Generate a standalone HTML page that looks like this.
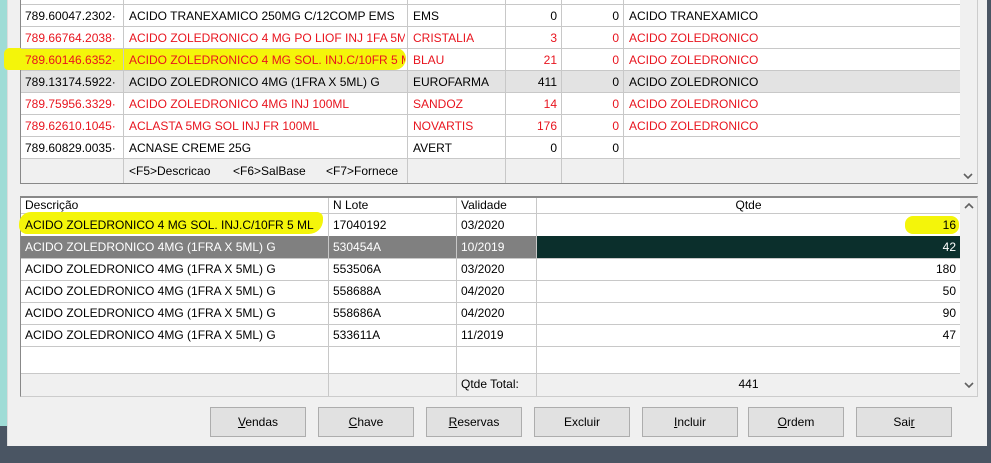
<!DOCTYPE html><html><head><style>
*{margin:0;padding:0;box-sizing:border-box}
body{width:991px;height:463px;overflow:hidden;background:#4a5563;font-family:Tahoma,"Liberation Sans",sans-serif;font-size:12px;position:relative}
.a{position:absolute}
.t{position:absolute;white-space:nowrap;line-height:22px;overflow:hidden}
.r{color:#e8141e}
.hl{position:absolute;background:#f4f50a;border-radius:10px}
.btn{position:absolute;top:407px;height:30px;width:96px;background:#e1e1e1;border:1px solid #adadad;text-align:center;line-height:28px}
.vl{position:absolute;width:1px;background:#c8c8c8}
.hlin{position:absolute;height:1px;background:#c8c8c8}
.ar{position:absolute;z-index:5}
</style></head><body>
<div class="a" style="left:0;top:0;width:8px;height:426px;background:#9fdcd6"></div>
<div class="a" style="left:7px;top:0;width:980px;height:446px;background:#f0f0f0;border-left:1px solid #ddd"></div>
<!-- top grid -->
<div class="a" style="left:20px;top:0;width:958px;height:184px;background:#fff;border-left:1px solid #888;border-bottom:1px solid #888;border-right:1px solid #ccc"></div>
<div class="a" style="left:21px;top:70px;width:939px;height:22px;background:#e3e3e3"></div>
<div class="a" style="left:21px;top:159px;width:939px;height:24px;background:#f0f0f0"></div>
<div class="a" style="left:960px;top:0;width:17px;height:183px;background:#f0f0f0"></div>
<div class="hl" style="left:4px;top:48px;width:402px;height:22px;border-radius:8px 14px 16px 6px"></div>
<div class="hlin" style="left:21px;top:4px;width:939px"></div>
<div class="hlin" style="left:21px;top:26px;width:939px"></div>
<div class="hlin" style="left:21px;top:48px;width:939px"></div>
<div class="hlin" style="left:21px;top:70px;width:939px"></div>
<div class="hlin" style="left:21px;top:92px;width:939px"></div>
<div class="hlin" style="left:21px;top:114px;width:939px"></div>
<div class="hlin" style="left:21px;top:136px;width:939px"></div>
<div class="hlin" style="left:21px;top:158px;width:939px"></div>
<div class="vl" style="left:123px;top:0;height:183px"></div>
<div class="vl" style="left:407px;top:0;height:183px"></div>
<div class="vl" style="left:505px;top:0;height:183px"></div>
<div class="vl" style="left:561px;top:0;height:183px"></div>
<div class="vl" style="left:623px;top:0;height:183px"></div>
<svg class="ar" style="left:963px;top:172px" width="10" height="8"><path d="M1 2 L5 6 L9 2" stroke="#606060" stroke-width="1.6" fill="none"/></svg>

<div class="t" style="left:25px;top:5px;width:97px">789.60047.2302·</div><div class="t" style="left:129px;top:5px">ACIDO TRANEXAMICO 250MG C/12COMP EMS</div><div class="t" style="left:413px;top:5px">EMS</div><div class="t" style="left:506px;top:5px;width:51px;text-align:right">0</div><div class="t" style="left:562px;top:5px;width:57px;text-align:right">0</div><div class="t" style="left:629px;top:5px">ACIDO TRANEXAMICO</div>
<div class="t r" style="left:25px;top:27px;width:97px">789.66764.2038·</div><div class="t r" style="left:129px;top:27px;width:276px">ACIDO ZOLEDRONICO 4 MG PO LIOF INJ 1FA 5ML</div><div class="t r" style="left:413px;top:27px">CRISTALIA</div><div class="t r" style="left:506px;top:27px;width:51px;text-align:right">3</div><div class="t r" style="left:562px;top:27px;width:57px;text-align:right">0</div><div class="t r" style="left:629px;top:27px">ACIDO ZOLEDRONICO</div>
<div class="t r" style="left:25px;top:49px;width:97px">789.60146.6352·</div><div class="t r" style="left:129px;top:49px;width:276px">ACIDO ZOLEDRONICO 4 MG SOL. INJ.C/10FR 5 ML</div><div class="t r" style="left:413px;top:49px">BLAU</div><div class="t r" style="left:506px;top:49px;width:51px;text-align:right">21</div><div class="t r" style="left:562px;top:49px;width:57px;text-align:right">0</div><div class="t r" style="left:629px;top:49px">ACIDO ZOLEDRONICO</div>
<div class="t" style="left:25px;top:71px;width:97px">789.13174.5922·</div><div class="t" style="left:129px;top:71px">ACIDO ZOLEDRONICO 4MG (1FRA X 5ML) G</div><div class="t" style="left:413px;top:71px">EUROFARMA</div><div class="t" style="left:506px;top:71px;width:51px;text-align:right">411</div><div class="t" style="left:562px;top:71px;width:57px;text-align:right">0</div><div class="t" style="left:629px;top:71px">ACIDO ZOLEDRONICO</div>
<div class="t r" style="left:25px;top:93px;width:97px">789.75956.3329·</div><div class="t r" style="left:129px;top:93px">ACIDO ZOLEDRONICO 4MG INJ 100ML</div><div class="t r" style="left:413px;top:93px">SANDOZ</div><div class="t r" style="left:506px;top:93px;width:51px;text-align:right">14</div><div class="t r" style="left:562px;top:93px;width:57px;text-align:right">0</div><div class="t r" style="left:629px;top:93px">ACIDO ZOLEDRONICO</div>
<div class="t r" style="left:25px;top:115px;width:97px">789.62610.1045·</div><div class="t r" style="left:129px;top:115px">ACLASTA 5MG SOL INJ FR 100ML</div><div class="t r" style="left:413px;top:115px">NOVARTIS</div><div class="t r" style="left:506px;top:115px;width:51px;text-align:right">176</div><div class="t r" style="left:562px;top:115px;width:57px;text-align:right">0</div><div class="t r" style="left:629px;top:115px">ACIDO ZOLEDRONICO</div>
<div class="t" style="left:25px;top:137px;width:97px">789.60829.0035·</div><div class="t" style="left:129px;top:137px">ACNASE CREME 25G</div><div class="t" style="left:413px;top:137px">AVERT</div><div class="t" style="left:506px;top:137px;width:51px;text-align:right">0</div><div class="t" style="left:562px;top:137px;width:57px;text-align:right">0</div>
<div class="t" style="left:129px;top:160px">&lt;F5&gt;Descricao</div>
<div class="t" style="left:233px;top:160px">&lt;F6&gt;SalBase</div>
<div class="t" style="left:326px;top:160px;width:80px">&lt;F7&gt;Fornece</div>

<!-- bottom grid -->
<div class="a" style="left:20px;top:196px;width:958px;height:201px;background:#fff;border-top:2px solid #888;border-left:1px solid #888;border-right:1px solid #ccc;border-bottom:1px solid #ccc"></div>
<div class="a" style="left:21px;top:198px;width:939px;height:16px;background:#fff;border-bottom:1px solid #c8c8c8"></div>
<div class="a" style="left:960px;top:198px;width:17px;height:198px;background:#f0f0f0"></div>
<div class="a" style="left:21px;top:373px;width:939px;height:23px;background:#f0f0f0;border-top:1px solid #c8c8c8"></div>
<div class="a" style="left:21px;top:236px;width:516px;height:22px;background:#808080"></div>
<div class="a" style="left:537px;top:236px;width:423px;height:22px;background:#0b2f2c"></div>
<div class="hl" style="left:19px;top:212px;width:304px;height:22px;border-radius:12px 6px 14px 8px"></div>
<div class="hl" style="left:905px;top:216px;width:54px;height:18px;border-radius:8px"></div>
<div class="hlin" style="left:21px;top:258px;width:939px"></div>
<div class="hlin" style="left:21px;top:280px;width:939px"></div>
<div class="hlin" style="left:21px;top:302px;width:939px"></div>
<div class="hlin" style="left:21px;top:324px;width:939px"></div>
<div class="hlin" style="left:21px;top:346px;width:939px"></div>
<div class="vl" style="left:328px;top:198px;height:198px"></div>
<div class="vl" style="left:456px;top:198px;height:198px"></div>
<div class="vl" style="left:536px;top:198px;height:198px"></div>
<svg class="ar" style="left:964px;top:202px" width="10" height="8"><path d="M1 6 L5 2 L9 6" stroke="#606060" stroke-width="1.6" fill="none"/></svg>
<svg class="ar" style="left:964px;top:381px" width="10" height="8"><path d="M1 2 L5 6 L9 2" stroke="#606060" stroke-width="1.6" fill="none"/></svg>
<div class="t" style="left:25px;top:196px;line-height:18px">Descrição</div><div class="t" style="left:333px;top:196px;line-height:18px">N Lote</div><div class="t" style="left:461px;top:196px;line-height:18px">Validade</div><div class="t" style="left:537px;top:196px;width:423px;text-align:center;line-height:18px">Qtde</div>
<div class="t" style="left:25px;top:214px">ACIDO ZOLEDRONICO 4 MG SOL. INJ.C/10FR 5 ML</div><div class="t" style="left:333px;top:214px">17040192</div><div class="t" style="left:461px;top:214px">03/2020</div><div class="t" style="left:537px;top:214px;width:419px;text-align:right">16</div>
<div class="t" style="left:25px;top:236px;color:#fff">ACIDO ZOLEDRONICO 4MG (1FRA X 5ML) G</div><div class="t" style="left:333px;top:236px;color:#fff">530454A</div><div class="t" style="left:461px;top:236px;color:#fff">10/2019</div><div class="t" style="left:537px;top:236px;width:419px;text-align:right;color:#fff">42</div>
<div class="t" style="left:25px;top:258px">ACIDO ZOLEDRONICO 4MG (1FRA X 5ML) G</div><div class="t" style="left:333px;top:258px">553506A</div><div class="t" style="left:461px;top:258px">03/2020</div><div class="t" style="left:537px;top:258px;width:419px;text-align:right">180</div>
<div class="t" style="left:25px;top:280px">ACIDO ZOLEDRONICO 4MG (1FRA X 5ML) G</div><div class="t" style="left:333px;top:280px">558688A</div><div class="t" style="left:461px;top:280px">04/2020</div><div class="t" style="left:537px;top:280px;width:419px;text-align:right">50</div>
<div class="t" style="left:25px;top:302px">ACIDO ZOLEDRONICO 4MG (1FRA X 5ML) G</div><div class="t" style="left:333px;top:302px">558686A</div><div class="t" style="left:461px;top:302px">04/2020</div><div class="t" style="left:537px;top:302px;width:419px;text-align:right">90</div>
<div class="t" style="left:25px;top:324px">ACIDO ZOLEDRONICO 4MG (1FRA X 5ML) G</div><div class="t" style="left:333px;top:324px">533611A</div><div class="t" style="left:461px;top:324px">11/2019</div><div class="t" style="left:537px;top:324px;width:419px;text-align:right">47</div>
<div class="t" style="left:461px;top:373px">Qtde Total:</div><div class="t" style="left:537px;top:373px;width:423px;text-align:center">441</div>

<div class="btn" style="left:210px"><u>V</u>endas</div>
<div class="btn" style="left:318px"><u>C</u>have</div>
<div class="btn" style="left:426px"><u>R</u>eservas</div>
<div class="btn" style="left:534px">Excluir</div>
<div class="btn" style="left:642px"><u>I</u>ncluir</div>
<div class="btn" style="left:748px"><u>O</u>rdem</div>
<div class="btn" style="left:856px">Sai<u>r</u></div>
</body></html>
